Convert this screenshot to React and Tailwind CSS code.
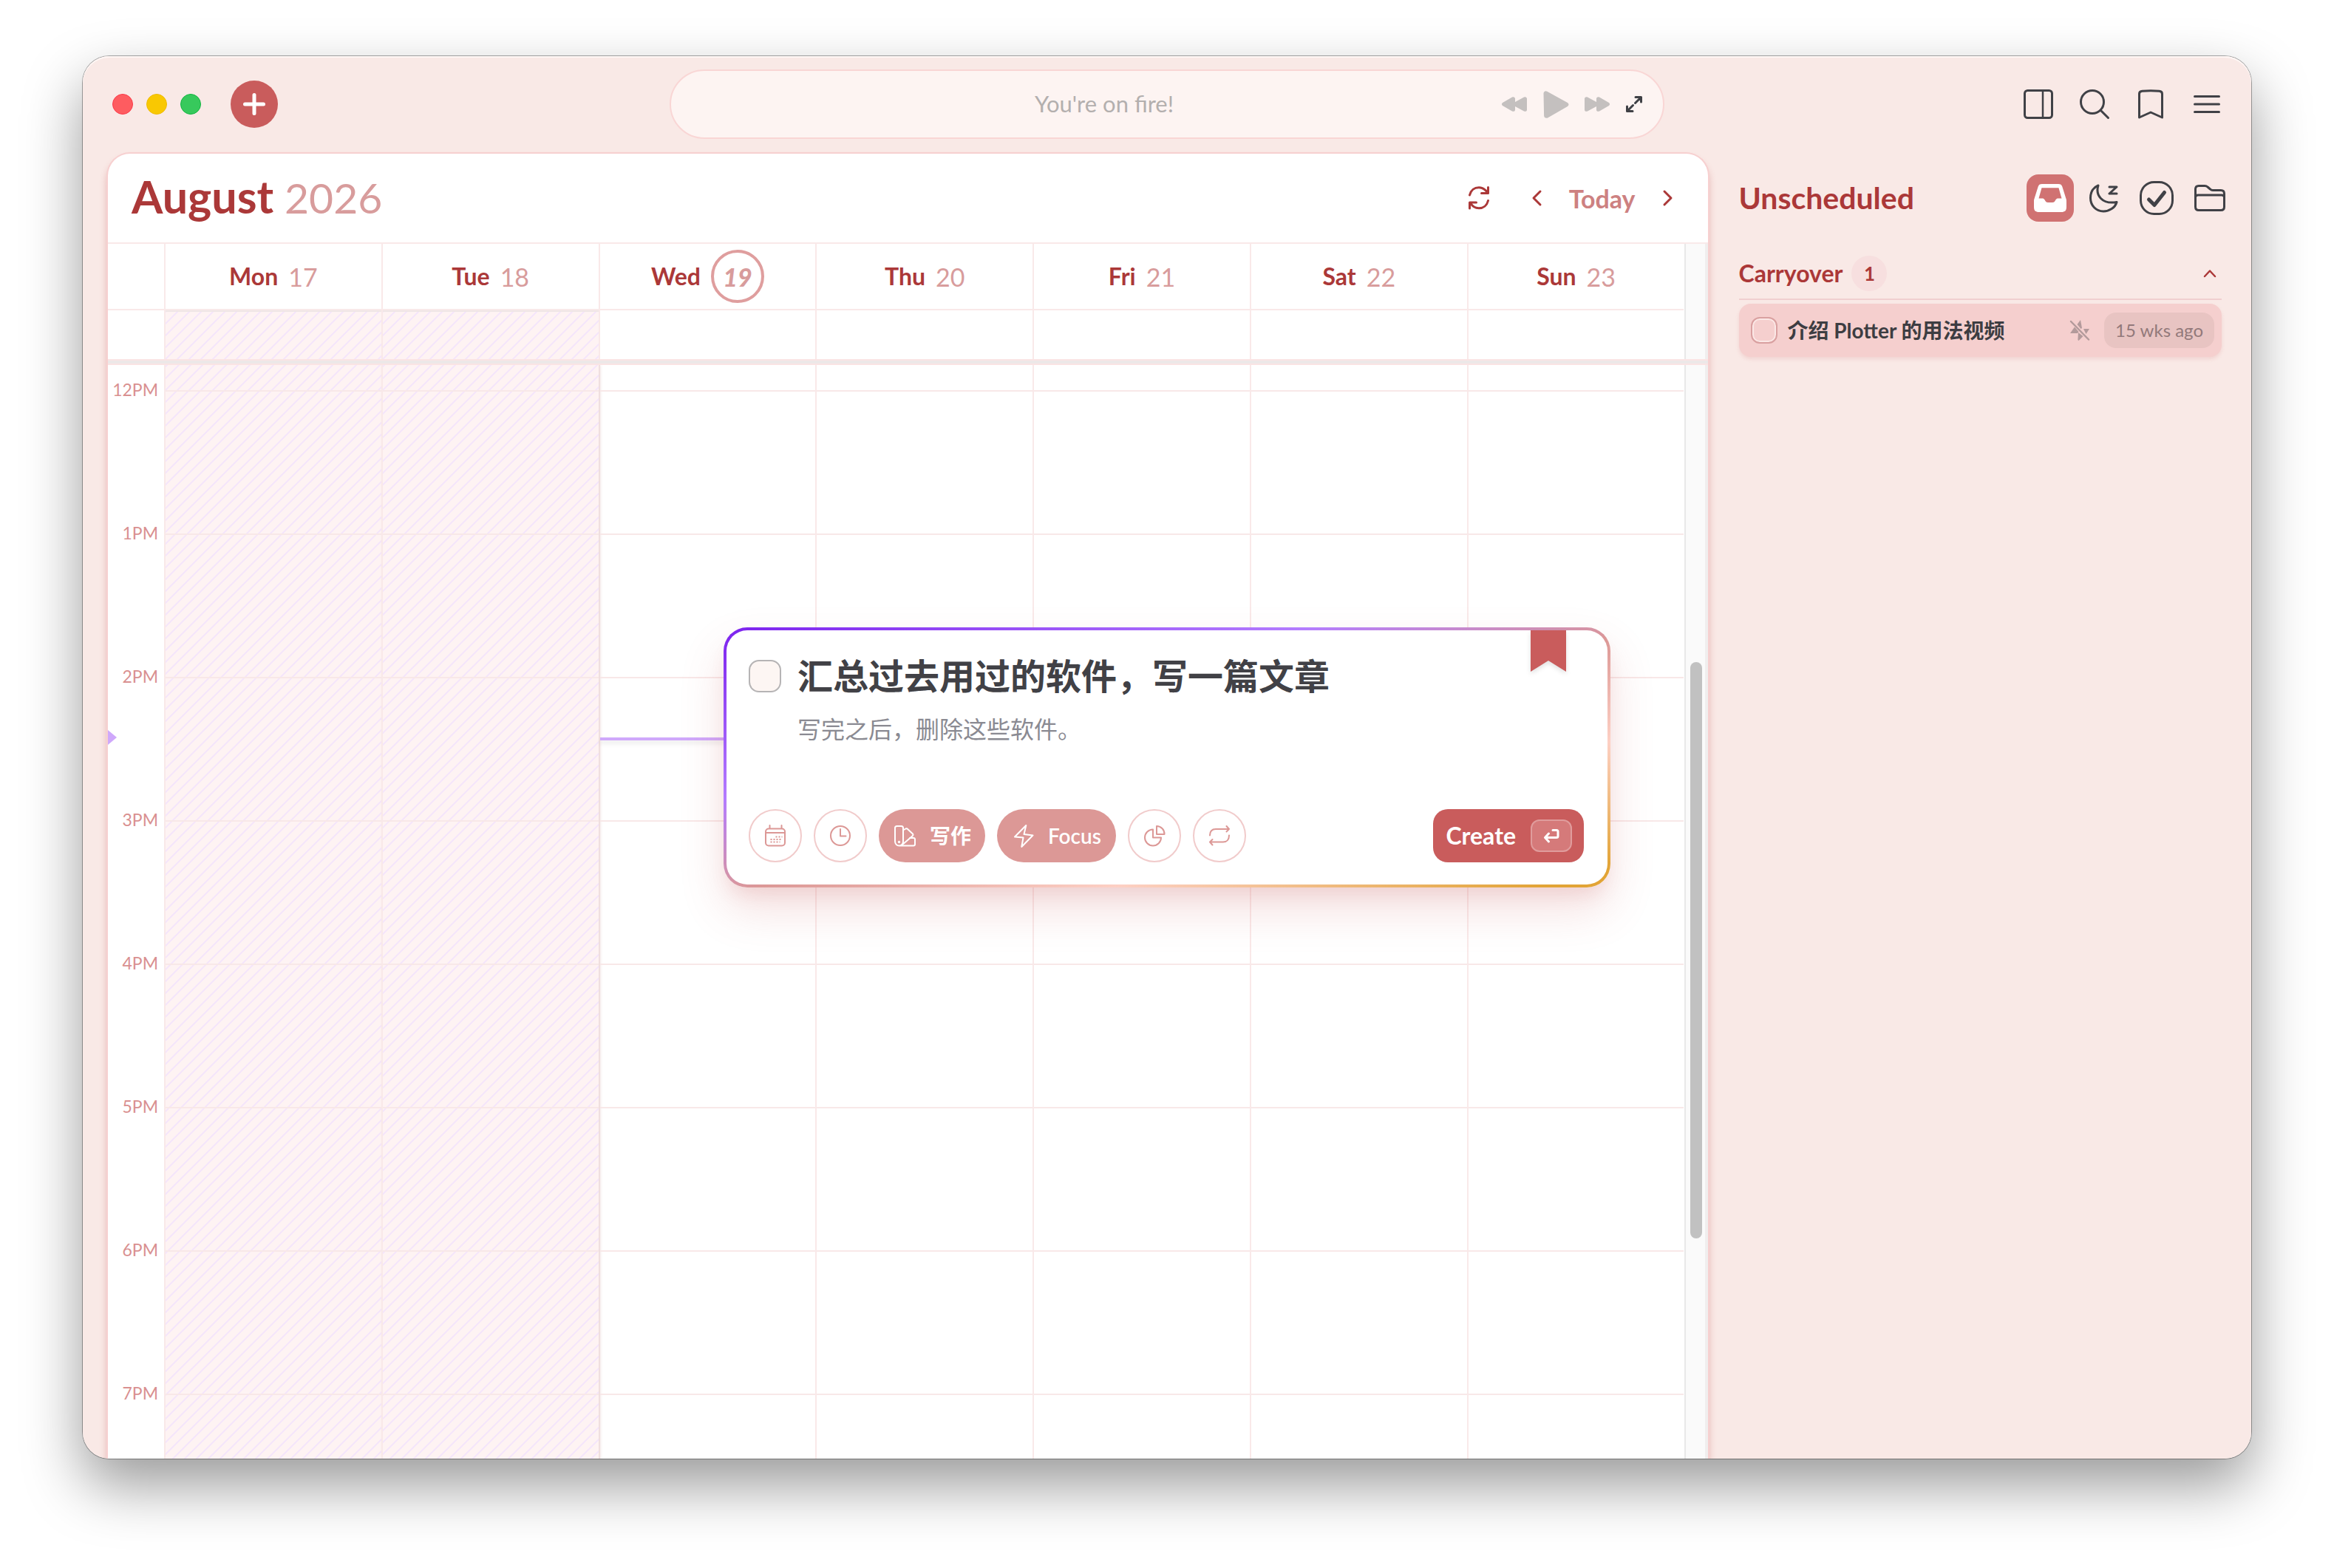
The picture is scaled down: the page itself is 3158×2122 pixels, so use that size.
import { clsx } from "clsx";

const days = [
  { name: "Mon", date: 17, past: true },
  { name: "Tue", date: 18, past: true },
  { name: "Wed", date: 19, today: true },
  { name: "Thu", date: 20 },
  { name: "Fri", date: 21 },
  { name: "Sat", date: 22 },
  { name: "Sun", date: 23 },
];

const hours = ["12PM", "1PM", "2PM", "3PM", "4PM", "5PM", "6PM", "7PM"];

const stripes =
  "bg-[#fef3f3] bg-[linear-gradient(135deg,#f5e6fa_12%,transparent_12%,transparent_50%,#f5e6fa_50%,#f5e6fa_62%,transparent_62%)] bg-size-[16px_16px]";

const Icon = ({ w, h, stroke = 2, fill = "none", children }) => (
  <svg
    width={w}
    height={h}
    viewBox={`0 0 ${w} ${h}`}
    fill={fill}
    stroke={fill === "none" ? "currentColor" : "none"}
    strokeWidth={stroke}
    strokeLinecap="round"
    strokeLinejoin="round"
    className="shrink-0 overflow-visible"
    aria-hidden="true"
  >
    {children}
  </svg>
);

const IconButton = ({ label, className, children }) => (
  <button
    type="button"
    aria-label={label}
    className={clsx("flex shrink-0 items-center justify-center", className)}
  >
    {children}
  </button>
);

const Player = () => (
  <div className="flex h-[94px] w-[1346px] items-center rounded-full border-2 border-[#f9d6d5] bg-[#fdf4f2] pr-7">
    <p className="flex-1 pb-[2px] pl-[68px] text-center text-[31px] text-[#b3afae]">
      You're on fire!
    </p>
    <div className="ml-5 flex w-[190px] items-center justify-between text-[#c4c0bf]">
      <IconButton label="Previous">
        <Icon w={34} h={20} fill="currentColor">
          <path d="M1 8 14 .6C16-.5 18 .5 18 2.500V7L30 .6C32-.5 34 .5 34 2.500V17.500C34 19.500 32 20.500 30 19.400L18 13V17.500C18 19.500 16 20.500 14 19.400L1 12C-.4 11-.4 9 1 8Z" />
        </Icon>
      </IconButton>
      <IconButton label="Play">
        <Icon w={35} h={37} fill="currentColor">
          <path d="M.5 3.500C.500 .800 3 -.700 5.300 .700L33 16C35 17.300 35 19.700 33 21L6.500 36.300C4 37.700 1.200 36.300 1.100 33.500Z" />
        </Icon>
      </IconButton>
      <IconButton label="Next">
        <Icon w={34} h={20} fill="currentColor">
          <path d="M33 8 20 .6C18-.5 16 .5 16 2.500V7L4 .6C2-.5 0 .5 0 2.500V17.500C0 19.500 2 20.500 4 19.400L16 13V17.500C16 19.500 18 20.500 20 19.400L33 12C34.400 11 34.400 9 33 8Z" />
        </Icon>
      </IconButton>
      <IconButton label="Expand" className="text-[#3f4045]">
        <Icon w={22} h={22} stroke={3}>
          <path d="M12.500 9.500 20.500 1.500M13 1.500h7.500V8M9.500 12.500 1.500 20.500M1.500 14v6.500H9" />
        </Icon>
      </IconButton>
    </div>
  </div>
);

const TopBar = () => (
  <header className="grid h-[130px] shrink-0 grid-cols-[1fr_auto_1fr] items-center pr-10 pl-10">
    <div className="flex items-center">
      <div className="flex gap-[18px]">
        <span className="size-7 rounded-full border border-[#fb3a4a] bg-[#fe5c60]" />
        <span className="size-7 rounded-full border border-[#efbb00] bg-[#f9c802]" />
        <span className="size-7 rounded-full border border-[#12b540] bg-[#37c95c]" />
      </div>
      <IconButton
        label="Add task"
        className="ml-10 size-16 rounded-full bg-[#c95c5c] text-white"
      >
        <Icon w={30} h={30} stroke={5}>
          <path d="M15 2.500v25M2.500 15h25" />
        </Icon>
      </IconButton>
    </div>
    <Player />
    <nav className="flex justify-end gap-9 text-[#404146]">
      <IconButton label="Toggle panel" className="size-10">
        <Icon w={40} h={40} stroke={3}>
          <rect x="1.500" y="1.500" width="37" height="37" rx="4" />
          <path d="M26 2v36" strokeWidth="2.500" />
        </Icon>
      </IconButton>
      <IconButton label="Search" className="size-10">
        <Icon w={40} h={40} stroke={3}>
          <circle cx="17" cy="17" r="15.500" />
          <path d="M28.500 28.500 38.500 38.500" />
        </Icon>
      </IconButton>
      <IconButton label="Bookmarks" className="size-10">
        <Icon w={40} h={40} stroke={3}>
          <path d="M4.500 38V6C4.500 3.500 6 2.500 8.500 2.300C16 1.700 24 1.700 31.500 2.300C34 2.500 35.500 3.500 35.500 6V38L20 31Z" />
        </Icon>
      </IconButton>
      <IconButton label="Menu" className="size-10">
        <Icon w={40} h={40} stroke={3}>
          <path d="M3.500 9.500h33M3.500 20h33M3.500 30.500h33" />
        </Icon>
      </IconButton>
    </nav>
  </header>
);

const CalendarHeader = () => (
  <div className="flex h-[122px] shrink-0 items-center justify-between border-b-2 border-[#f9e9e9] pr-[46px] pl-8 text-[#ab3838]">
    <h1 className="pb-1 text-[61px] font-bold">
      August{" "}
      <span className="text-[57px] font-normal text-[#d89c9c]">2026</span>
    </h1>
    <div className="flex items-center">
      <IconButton label="Refresh" className="mr-14">
        <Icon w={28} h={32} stroke={3}>
          <path d="M1.500 12C3 5.500 8 1.700 14 1.700C19 1.700 23 4.500 25.500 9M26.500 1.500V9.500H17.500M26.500 19.500C25 26 20 29.800 14 29.800C9 29.800 5 27 2.500 22.500M1.500 30V22H10.500" />
        </Icon>
      </IconButton>
      <IconButton label="Previous week" className="mr-9 w-4">
        <Icon w={12} h={20} stroke={3}>
          <path d="M11 1 2 10 11 19" />
        </Icon>
      </IconButton>
      <button type="button" className="text-[34px] font-bold text-[#cd8181]">
        Today
      </button>
      <IconButton label="Next week" className="ml-9 w-4">
        <Icon w={12} h={20} stroke={3}>
          <path d="M1 1 10 10 1 19" />
        </Icon>
      </IconButton>
    </div>
  </div>
);

const ScrollGutter = ({ children }) => (
  <div className="flex w-8 shrink-0 justify-center border-l-2 border-[#e8e8e8] bg-[#fafafa] pr-[2px] shadow-[inset_-4px_0_#f0eeee]">
    {children}
  </div>
);

const WeekHeader = () => (
  <div className="flex shrink-0">
    <div className="grid flex-1 grid-cols-[76px_repeat(7,1fr)]">
      <div className="border-b-2 border-[#f9e9e9]" />
      {days.map((day) => (
        <div
          key={day.name}
          className="flex h-[90px] items-center justify-center gap-[14px] border-b-2 border-l-2 border-[#f9e9e9]"
        >
          <span className="text-[32px] font-bold text-[#ab3838]">
            {day.name}
          </span>
          {day.today ? (
            <span className="flex size-[72px] items-center justify-center rounded-full border-4 border-[#df9e9e] text-[34px] font-black text-[#d89c9c] italic">
              {day.date}
            </span>
          ) : (
            <span className="text-[34px] text-[#d89c9c]">{day.date}</span>
          )}
        </div>
      ))}
      <div className="h-[66px]" />
      {days.map((day) => (
        <div
          key={day.name}
          className={clsx(
            "border-l-2 border-[#f9e9e9]",
            day.past && stripes,
            day.past && "shadow-[inset_0_2px_#efe6e6]",
          )}
        />
      ))}
    </div>
    <ScrollGutter />
  </div>
);

const HourGrid = () => (
  <div className="flex min-h-0 flex-1 overflow-hidden">
    <div className="relative grid flex-1 grid-cols-[76px_repeat(7,1fr)]">
      <div className="pt-[17px] pr-2 text-right text-[23px] text-[#d99090]">
        {hours.map((hour) => (
          <div key={hour} className="h-[194px] leading-8">
            {hour}
          </div>
        ))}
      </div>
      {days.map((day) => (
        <div
          key={day.name}
          className={clsx(
            "relative border-l-2",
            day.today ? "border-[#f0dfdf]" : "border-[#f9e9e9]",
            day.past && stripes,
            day.name === "Tue" && "shadow-[2px_0_4px_#eddcdc]",
          )}
        >
          <div className="h-9 border-b-2 border-[#f8e8e8]" />
          {hours.map((hour) => (
            <div key={hour} className="h-[194px] border-b-2 border-[#f8e8e8]" />
          ))}
          {day.today && (
            <div className="absolute inset-x-0 top-[504px] h-1 bg-[#cfa8fb] shadow-[0_4px_6px_#0000001a]" />
          )}
        </div>
      ))}
      <svg
        width="12"
        height="20"
        viewBox="0 0 12 20"
        className="absolute top-[494px] left-0 fill-[#cfa8fb]"
      >
        <path d="M0 0 12 10 0 20Z" />
      </svg>
    </div>
    <ScrollGutter>
      <div className="mt-[402px] h-[780px] w-4 rounded-full bg-[#c1c1c1]" />
    </ScrollGutter>
  </div>
);

const Calendar = () => (
  <main className="ml-8 flex min-w-0 flex-1 flex-col overflow-hidden rounded-t-[32px] border-2 border-b-0 border-[#f7d0d0] bg-white shadow-[0_8px_10px_#c95c5c55]">
    <CalendarHeader />
    <WeekHeader />
    <div className="h-2 shrink-0 border-y-2 border-[#fae4e4] bg-[#ede8e8]" />
    <HourGrid />
  </main>
);

const Sidebar = () => (
  <aside className="w-1/4 shrink-0 px-10">
    <div className="flex h-[124px] items-center justify-between">
      <h2 className="text-[41px] font-bold text-[#ab3838]">Unscheduled</h2>
      <div className="-mr-4 flex gap-2 text-[#404146]">
        <IconButton
          label="Inbox"
          className="size-16 rounded-2xl bg-[#d07272] text-white"
        >
          <Icon w={44} h={38} fill="currentColor">
            <path
              fillRule="evenodd"
              d="M11 0H33C36 0 37.500 1 38.300 3.500L43.500 20C44 21.500 44 22 44 24V31C44 36 42 38 37 38H7C2 38 0 36 0 31V24C0 22 0 21.500 .5 20L5.700 3.500C6.500 1 8 0 11 0ZM10.500 5.300 6.500 19.500H11C14 19.500 14.500 21.500 15.500 23C16.300 24.300 17 25 19 25H25C27 25 27.700 24.300 28.500 23C29.500 21.500 30 19.500 33 19.500H37.500L33.500 5.300Z"
            />
          </Icon>
        </IconButton>
        <IconButton label="Snoozed" className="size-16">
          <Icon w={38} h={38} stroke={3}>
            <path d="M12 2C8 15 17 28 37 24.500C35 32 27 37 19 37C9 37 1.500 29 1.500 19C1.500 11 5 5 12 2Z" />
            <path d="M27 4H37L27 13H37" />
          </Icon>
        </IconButton>
        <IconButton label="Completed" className="size-16">
          <Icon w={46} h={46} stroke={3}>
            <rect x="1.500" y="1.500" width="43" height="43" rx="18" />
            <path d="M12.500 25 20 32.500 33.500 15.500" strokeWidth="5" />
          </Icon>
        </IconButton>
        <IconButton label="Folders" className="size-16">
          <Icon w={42} h={36} stroke={3}>
            <path d="M1.500 30V6C1.500 3 3 1.500 6 1.500H14C16 1.500 17 2 18 3L21.500 6C22.500 7 23.500 7.500 25 7.500H36C39 7.500 40.500 9 40.500 12V30C40.500 33 39 34.500 36 34.500H6C3 34.500 1.500 33 1.500 30ZM1.500 17C1.500 14.500 3 14 5 14H37C39 14 40.500 14.500 40.500 17" />
          </Icon>
        </IconButton>
      </div>
    </div>
    <div className="mt-3 flex h-16 items-start justify-between border-b-2 border-[#f0cfcf] pt-1 text-[#ab3838]">
      <div className="flex items-center gap-3">
        <h3 className="text-[32px] font-bold">Carryover</h3>
        <span className="flex size-12 items-center justify-center rounded-full bg-[#f7dfdf] text-[26px] font-bold">
          1
        </span>
      </div>
      <IconButton label="Collapse" className="mr-2 h-12">
        <Icon w={16} h={10} stroke={2.500}>
          <path d="M1 9 8 1.500 15 9" />
        </Icon>
      </IconButton>
    </div>
    <label className="mt-[5px] flex h-[72px] items-center rounded-2xl bg-[#f5cfce] pr-[10px] pl-4 shadow-[0_3px_5px_#c95c5c26]">
      <input
        type="checkbox"
        className="size-9 appearance-none rounded-[12px] border-2 border-[#d9a0a0] shadow-[inset_0_0_0_2px_#fbe8e6]"
      />
      <span className="ml-[14px] flex-1 text-[28px] font-bold text-[#3d3d42]">
        介绍 Plotter 的用法视频
      </span>
      <span className="mr-5 text-[#b39a9b]">
        <Icon w={26} h={28} fill="currentColor">
          <path d="M14 0 9.500 6 14.500 12 16 11ZM6 9.500 0 18H10L11.500 16ZM18 12H26L21.500 19ZM11 17 17.500 22 11.500 28C11 28 10 27 10.500 25Z" />
          <path d="M1 2 25 26.500" stroke="currentColor" strokeWidth="2.500" />
        </Icon>
      </span>
      <span className="flex h-12 items-center rounded-2xl bg-[#e8c4c2] px-[15px] text-[24px] text-[#92797a]">
        15 wks ago
      </span>
    </label>
  </aside>
);

const round =
  "size-[72px] rounded-full border-2 border-[#f1cbcb] text-[#dc9896]";
const pill =
  "flex h-[72px] items-center gap-5 rounded-full bg-[#dc9896] text-white";

const TaskDialog = () => (
  <form className="absolute top-[773px] left-1/2 flex h-[352px] w-[1200px] -translate-x-1/2 rounded-[32px] bg-[linear-gradient(to_bottom_right,#7c22ee,#b37cfe_33%,#dc9896_52%,#fdd0c4_72%,#e2a436_96%)] p-1 shadow-[0_30px_60px_#c95c5c30,0_16px_24px_-8px_#c95c5c26]">
    <div className="relative flex flex-1 flex-col justify-between rounded-[28px] bg-white px-[30px] pt-7 pb-[30px]">
      <svg
        width="48"
        height="56"
        viewBox="0 0 48 56"
        className="absolute top-0 right-14 fill-[#c95c5c] drop-shadow-md"
      >
        <path d="M0 0H48V56L24 41 0 56Z" />
      </svg>
      <div className="flex gap-[22px]">
        <input
          type="checkbox"
          aria-label="Done"
          className="mt-3 size-11 shrink-0 appearance-none rounded-[14px] border-2 border-[#b6b4b5] bg-[#fdf6f3]"
        />
        <div className="flex flex-1 flex-col gap-1">
          <input
            aria-label="Title"
            defaultValue="汇总过去用过的软件，写一篇文章"
            className="h-17 w-[800px] text-[48px] leading-17 font-bold text-[#414146] outline-none"
          />
          <input
            aria-label="Notes"
            defaultValue="写完之后，删除这些软件。"
            className="h-16 w-[800px] text-[32px] text-[#8a8a92] outline-none"
          />
        </div>
      </div>
      <div className="flex items-center gap-4">
        <IconButton label="Date" className={round}>
          <Icon w={28} h={28}>
            <rect x="1" y="4.500" width="26" height="23" rx="4" />
            <path d="M1 10h26M6.500 0v4M22.500 0v4" />
            <path
              d="M14.500 15.500h9M7.500 19h16M7.500 22.500h13"
              strokeDasharray="2 2"
              strokeLinecap="butt"
            />
          </Icon>
        </IconButton>
        <IconButton label="Time" className={round}>
          <Icon w={28} h={28}>
            <circle cx="14" cy="14" r="13" />
            <path d="M14 5v9.500h7.500" />
          </Icon>
        </IconButton>
        <button type="button" className={clsx(pill, "w-36 pl-[21px]")}>
          <Icon w={28} h={28}>
            <path d="M1 3.500C1 2 2 1 3.500 1h6C11 1 12 2 12 3.500V21.500C12 25 9.500 27.500 6.500 27.500S1 25 1 21.500ZM12 6.500 15.500 4.500C16.500 4 17.500 4 18 5L25 11.500C25.700 12.300 25.700 13 25 14L11 26M21 17h5C27 17 28 18 28 19V25.500C28 27 27 27.500 26 27.500H6.500" />
            <circle cx="6.500" cy="22.500" r=".7" />
          </Icon>
          <span className="text-[28px] font-bold">写作</span>
        </button>
        <button type="button" className={clsx(pill, "w-[161px] pl-[23px]")}>
          <Icon w={26} h={31}>
            <path d="M16.300 1 1 16.500 12.500 17.500 10.300 30 25.500 14.500 13.500 13Z" />
          </Icon>
          <span className="text-[28px] font-semibold">Focus</span>
        </button>
        <IconButton label="Progress" className={round}>
          <Icon w={28} h={28}>
            <path d="M12 5.500A11 11 0 1 0 23 16.500H12ZM17 1A10.500 10.500 0 0 1 27.500 12H17Z" />
          </Icon>
        </IconButton>
        <IconButton label="Repeat" className={round}>
          <Icon w={28} h={28}>
            <path d="M1 13.500C1 8 4 5 9 5H27M23.500 1 27 5 23.500 8.500M27 13.500C27 19 24 22.500 19 22.500H1M4.500 19 1 22.500 4.500 26.500" />
          </Icon>
        </IconButton>
        <button
          type="submit"
          className="mr-[2px] ml-auto flex h-[72px] items-center gap-5 rounded-[20px] bg-[#c95c5c] pr-4 pl-[17px] text-[32px] font-bold text-white"
        >
          Create
          <span className="flex h-11 w-14 items-center justify-center rounded-xl border-2 border-[#e09c9c] bg-[#d57a7a]">
            <Icon w={20} h={18} stroke={3}>
              <path d="M12 1.500h5C18.500 1.500 19 2 19 3.500V9.500C19 11 18.500 11.500 17 11.500H1.500M6.500 6 1.500 11.500 6.500 17" />
            </Icon>
          </span>
        </button>
      </div>
    </div>
  </form>
);

const App = () => (
  <div className="h-screen bg-white px-28 pt-[76px] pb-[148px] font-[family-name:Lato,'Noto_Sans_CJK_SC',sans-serif]">
    <div className="relative h-full rounded-[36px] shadow-[0_0_0_1px_#00000055,0_36px_80px_#00000066]">
      <div className="flex h-full flex-col overflow-hidden rounded-[36px] bg-[#f9e9e6] shadow-[inset_0_2px_#fff7f5]">
        <TopBar />
        <div className="flex min-h-0 flex-1">
          <Calendar />
          <Sidebar />
        </div>
      </div>
      <TaskDialog />
    </div>
  </div>
);

export default App;
